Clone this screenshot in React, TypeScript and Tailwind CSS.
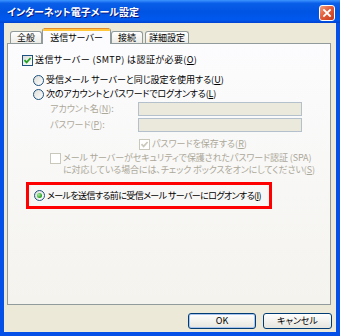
import React from "react";

const font = "font-['Noto_Sans_CJK_JP',sans-serif] [font-feature-settings:'palt']";

function Check({ checked, disabled }: { checked?: boolean; disabled?: boolean }) {
  return (
    <span
      className={
        disabled
          ? "w-[11px] h-[11px] border border-[#cac8bb] bg-white flex items-center justify-center shrink-0"
          : "w-[11px] h-[11px] border border-[#1c5180] bg-linear-to-br from-[#dcdcd7] to-white flex items-center justify-center shrink-0"
      }
    >
      {checked && (
        <svg width="9" height="9" viewBox="0 0 9 9">
          <path
            d="M1.5 4.2 L3.6 6.4 L7.6 2"
            fill="none"
            stroke={disabled ? "#cac8bb" : "#21a121"}
            strokeWidth="1.7"
          />
        </svg>
      )}
    </span>
  );
}

function Radio({ checked }: { checked?: boolean }) {
  return (
    <span className="w-[11px] h-[11px] rounded-full border border-[#1c5180] bg-linear-to-br from-[#dcdcd7] to-white flex items-center justify-center shrink-0">
      {checked && (
        <span className="w-[5px] h-[5px] rounded-full bg-[radial-gradient(circle_at_35%_35%,#a6ef9c,#21a121_70%)]" />
      )}
    </span>
  );
}

export default function App() {
  return (
    <div className={`w-[340px] h-[336px] flex flex-col bg-[#0550e6] text-[9px] text-black whitespace-nowrap ${font}`}>
      {/* title bar */}
      <div className="h-[23px] flex items-center justify-between pl-[7px] pr-[5px] bg-[linear-gradient(180deg,#3d95ff_0%,#0a5fe8_14%,#0054e3_50%,#0058ee_86%,#0041d0_100%)]">
        <span className="text-white font-bold text-[10px] leading-[14px] [text-shadow:1px_1px_0_#0a1883]">
          インターネット電子メール設定
        </span>
        <div className="mt-[2px] w-[16px] h-[16px] rounded-[3px] border border-white bg-[linear-gradient(135deg,#f0a080_0%,#e35d3a_45%,#c6391a_100%)] flex items-center justify-center">
          <svg width="10" height="10" viewBox="0 0 10 10">
            <path d="M2 2 L8 8 M8 2 L2 8" stroke="white" strokeWidth="1.8" strokeLinecap="square" />
          </svg>
        </div>
      </div>

      {/* body */}
      <div className="flex-1 mx-[4px] mb-[4px] bg-[#ece9d8] flex flex-col">
        {/* tabs */}
        <div className="h-[20px] flex items-end pl-[6px]">
          <div className="w-[32px] h-[12px] border border-b-0 border-[#919b9c] rounded-t-[3px] bg-linear-to-b from-white to-[#ecebe6] flex items-center justify-center leading-[12px]">
            全般
          </div>
          <div className="relative z-10 -mb-px w-[69px] h-[16px] border-x border-[#919b9c] rounded-t-[3px] bg-[#fcfcfe] flex flex-col">
            <div className="h-[1px] mx-[1px] bg-[#e68b2c]" />
            <div className="h-[2px] bg-[#ffc73c]" />
            <div className="flex-1 flex items-center justify-center leading-[12px]">送信サーバー</div>
          </div>
          <div className="w-[32px] h-[12px] border border-b-0 border-[#919b9c] rounded-t-[3px] bg-linear-to-b from-white to-[#ecebe6] flex items-center justify-center leading-[12px]">
            接続
          </div>
          <div className="ml-[2px] w-[44px] h-[12px] border border-b-0 border-[#919b9c] rounded-t-[3px] bg-linear-to-b from-white to-[#ecebe6] flex items-center justify-center leading-[12px]">
            詳細設定
          </div>
        </div>

        {/* panel */}
        <div className="ml-[3px] w-[324px] h-[262px] border border-[#919b9c] bg-linear-to-b from-[#fcfcfe] to-[#f4f3ee] flex flex-col pt-[9px] leading-[14px]">
          <div className="h-[14px] flex items-center pl-[14px] gap-[2px]">
            <Check checked />
            <span className="tracking-[0.4px]">
              送信サーバー (SMTP) は認証が必要(<u>O</u>)
            </span>
          </div>

          <div className="mt-[6px] h-[14px] flex items-center pl-[25px] gap-[2px]">
            <Radio />
            <span>
              受信メール サーバーと同じ設定を使用する(<u>U</u>)
            </span>
          </div>
          <div className="h-[14px] flex items-center pl-[25px] gap-[2px]">
            <Radio />
            <span className="tracking-[-0.2px]">
              次のアカウントとパスワードでログオンする(<u>L</u>)
            </span>
          </div>

          <div className="mt-[1px] h-[14px] flex items-center pl-[42px] text-[#aca899]">
            <span className="w-[88px]">
              アカウント名(<u>N</u>):
            </span>
            <div className="w-[164px] h-[14px] border border-[#b4c0cc] bg-[#ebe9db]" />
          </div>
          <div className="mt-[2px] h-[14px] flex items-center pl-[42px] text-[#aca899]">
            <span className="w-[88px]">
              パスワード(<u>P</u>):
            </span>
            <div className="w-[164px] h-[14px] border border-[#b4c0cc] bg-[#ebe9db]" />
          </div>

          <div className="mt-[5px] h-[14px] flex items-center pl-[131px] gap-[2px] text-[#aca899]">
            <Check checked disabled />
            <span>
              パスワードを保存する(<u>R</u>)
            </span>
          </div>

          <div className="mt-[1px] flex items-start pl-[42px] gap-[2px] text-[#aca899] leading-[12px] tracking-[-0.1px]">
            <span className="mt-[1px]">
              <Check disabled />
            </span>
            <span>
              メール サーバーがセキュリティで保護されたパスワード認証 (SPA)
              <br />
              に対応している場合には、チェック ボックスをオンにしてください(<u>S</u>)
            </span>
          </div>

          <div className="mt-[6px] ml-[18px] w-[246px] h-[27px] border-[3px] border-[#ff0000] flex items-center pl-[5px] gap-[2px]">
            <Radio checked />
            <span className="tracking-[-0.6px]">
              メールを送信する前に受信メール サーバーにログオンする(<u>I</u>)
            </span>
          </div>
        </div>

        {/* buttons */}
        <div className="mt-[8px] flex justify-end gap-[7px] pr-[4px]">
          <div className="w-[68px] h-[16px] rounded-[3px] border border-[#003c74] bg-linear-to-b from-white to-[#e6e5de] shadow-[inset_0_0_0_1px_#a8c4ee] flex items-center justify-center leading-[12px]">
            OK
          </div>
          <div className="w-[69px] h-[16px] rounded-[3px] border border-[#003c74] bg-linear-to-b from-white to-[#e6e5de] flex items-center justify-center leading-[12px]">
            キャンセル
          </div>
        </div>
      </div>
    </div>
  );
}
